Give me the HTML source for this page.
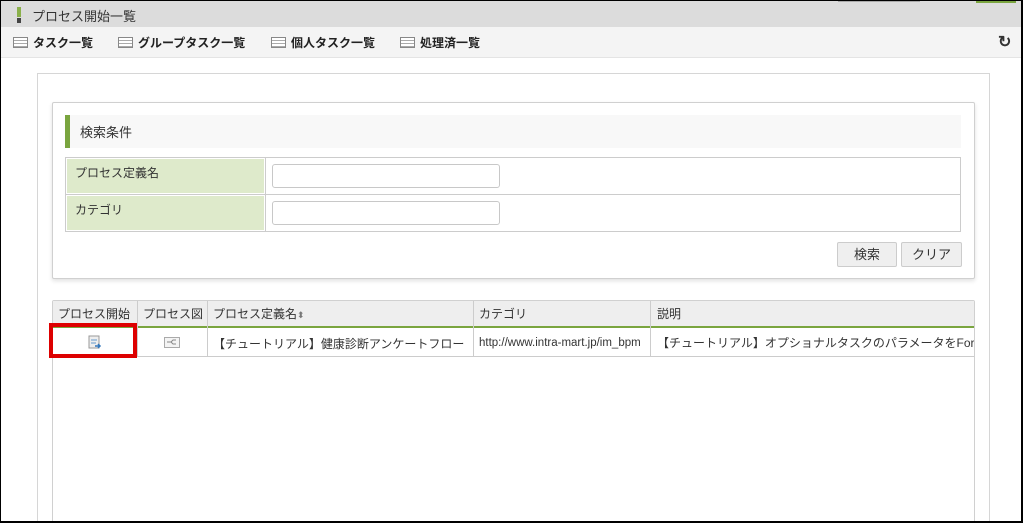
<!DOCTYPE html>
<html><head><meta charset="utf-8"><style>
*{box-sizing:border-box;margin:0;padding:0}
html,body{width:1023px;height:523px;overflow:hidden}
body{background:#fff;font-family:"Liberation Sans","Noto Sans CJK JP",sans-serif;font-size:12px;color:#333;position:relative}
.abs{position:absolute;white-space:nowrap}
.frame{position:absolute;left:0;top:0;width:1023px;height:523px;border:1px solid #000;border-width:1px 2px 2px 1px;pointer-events:none}
.ic{display:inline-block;width:15px;height:11px;border:1px solid #888;background:repeating-linear-gradient(#fff 0 2px,#aaa 2px 3px);vertical-align:-1px;margin-right:5px}
.tb span{position:absolute;top:34px;font-weight:bold;font-size:12px;color:#222;white-space:nowrap}
.c{position:absolute;overflow:hidden;white-space:nowrap;border-right:1px solid #ccc;padding-left:5px}
</style></head><body>
<div class="abs" style="left:0;top:0;width:1023px;height:27px;background:#dcdcdc"></div>
<div class="abs" style="left:838px;top:0;width:82px;height:2px;background:#aaa"></div>
<div class="abs" style="left:976px;top:0;width:40px;height:3px;background:#7aa53f"></div>
<div class="abs" style="left:17px;top:7px;width:4px;height:10px;background:#8ab04a"></div>
<div class="abs" style="left:17px;top:18px;width:4px;height:5px;background:#444"></div>
<div class="abs" style="left:32px;top:6px;font-size:13px;color:#333">プロセス開始一覧</div>
<div class="abs" style="left:0;top:27px;width:1023px;height:31px;background:#f4f4f4;border-bottom:1px solid #e4e4e4"></div>
<div class="tb">
<span style="left:13px"><i class="ic"></i>タスク一覧</span>
<span style="left:118px"><i class="ic"></i>グループタスク一覧</span>
<span style="left:271px"><i class="ic"></i>個人タスク一覧</span>
<span style="left:400px"><i class="ic"></i>処理済一覧</span>
</div>
<div class="abs" style="left:998px;top:32px;font-weight:bold;font-size:16px;color:#333">&#x21bb;</div>

<div class="abs" style="left:37px;top:73px;width:953px;height:460px;border:1px solid #d6d6d6"></div>
<div class="abs" style="left:52px;top:102px;width:923px;height:177px;border:1px solid #d0d0d0;border-radius:2px;box-shadow:0 2px 4px rgba(0,0,0,.12);background:#fff"></div>
<div class="abs" style="left:65px;top:115px;width:896px;height:33px;background:#f8f8f8;border-left:5px solid #7aa53f"></div>
<div class="abs" style="left:80px;top:122px;font-size:13px;color:#333">検索条件</div>

<div class="abs" style="left:65px;top:157px;width:896px;height:75px;border:1px solid #ccc"></div>
<div class="abs" style="left:65px;top:194px;width:896px;height:1px;background:#ccc"></div>
<div class="abs" style="left:265px;top:157px;width:1px;height:75px;background:#ccc"></div>
<div class="abs" style="left:67px;top:159px;width:197px;height:34px;background:#deeacb;padding:5px 8px">プロセス定義名</div>
<div class="abs" style="left:67px;top:196px;width:197px;height:34px;background:#deeacb;padding:5px 8px">カテゴリ</div>
<div class="abs" style="left:272px;top:164px;width:228px;height:24px;border:1px solid #c8c8c8;border-radius:3px"></div>
<div class="abs" style="left:272px;top:201px;width:228px;height:24px;border:1px solid #c8c8c8;border-radius:3px"></div>
<div class="abs" style="left:837px;top:242px;width:60px;height:25px;border:1px solid #ccc;border-radius:2px;background:#efefef;text-align:center;line-height:23px;font-size:13px">検索</div>
<div class="abs" style="left:901px;top:242px;width:61px;height:25px;border:1px solid #ccc;border-radius:2px;background:#efefef;text-align:center;line-height:23px;font-size:13px">クリア</div>

<div class="abs" style="left:52px;top:300px;width:923px;height:230px;border:1px solid #d0d0d0;border-radius:2px"></div>
<div class="abs" style="left:53px;top:301px;width:921px;height:27px;background:#eee;border-bottom:2px solid #7aa53f"></div>
<div class="abs" style="left:53px;top:356px;width:921px;height:1px;background:#ccc"></div>
<div class="c" style="left:53px;top:301px;width:85px;height:55px"><div style="line-height:26px">プロセス開始</div></div>
<div class="c" style="left:138px;top:301px;width:70px;height:55px"><div style="line-height:26px">プロセス図</div></div>
<div class="c" style="left:208px;top:301px;width:266px;height:55px"><div style="line-height:26px">プロセス定義名<span style="font-size:9px;color:#777">⬍</span></div><div style="line-height:28px;margin-top:2px">【チュートリアル】健康診断アンケートフロー</div></div>
<div class="c" style="left:474px;top:301px;width:177px;height:55px"><div style="line-height:26px">カテゴリ</div><div style="line-height:28px;margin-top:2px;font-size:11.5px">http://www.intra-mart.jp/im_bpm</div></div>
<div class="c" style="left:651px;top:301px;width:323px;height:55px;border-right:none;padding-left:6px"><div style="line-height:26px">説明</div><div style="line-height:28px;margin-top:2px">【チュートリアル】オプショナルタスクのパラメータをForm</div></div>
<svg class="abs" style="left:88px;top:335px" width="14" height="15"><rect x="1" y="1" width="10" height="12" fill="#eee" stroke="#999"/><path d="M3 5h6M3 8h5" stroke="#69c"/><path d="M7 11h5m-2-2l2 2-2 2" stroke="#37b" fill="none" stroke-width="1.5"/></svg>
<svg class="abs" style="left:164px;top:337px" width="16" height="11"><rect x=".5" y=".5" width="15" height="10" fill="#f4f4f4" stroke="#aaa"/><path d="M3 5h4l2-2h3M7 5l2 2h3" stroke="#888" fill="none"/></svg>
<div class="abs" style="left:49px;top:323px;width:88px;height:35px;border:4px solid #d00"></div>
<div class="frame"></div>
</body></html>
